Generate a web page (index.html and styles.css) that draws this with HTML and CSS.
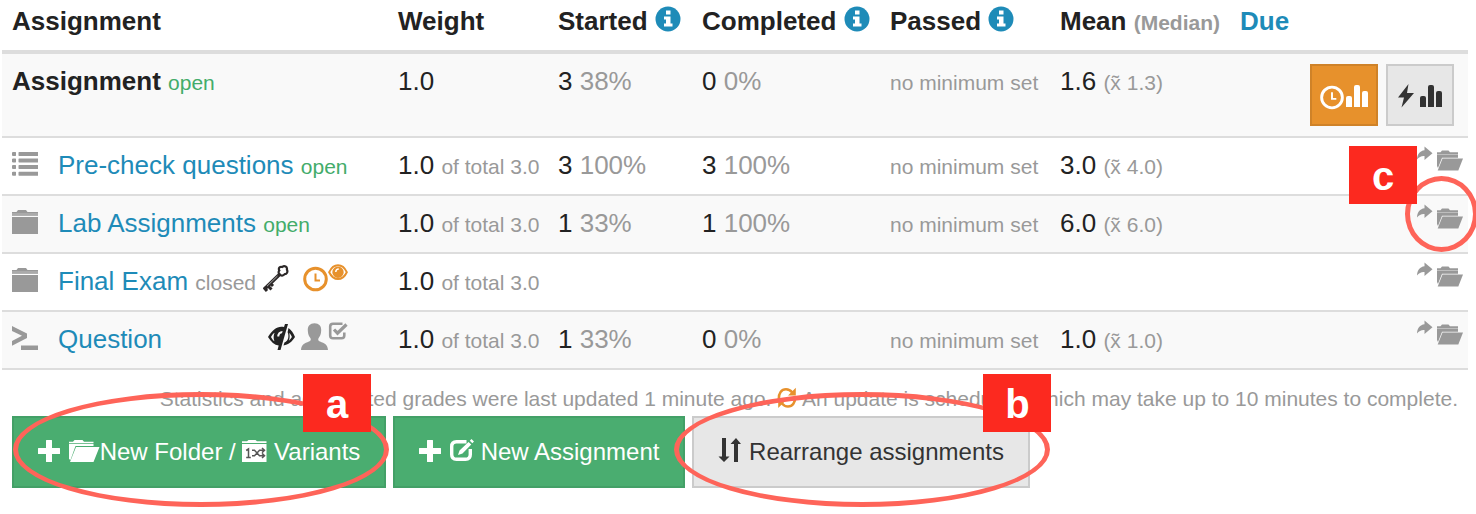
FILE: index.html
```html
<!DOCTYPE html>
<html lang="en">
<head>
<meta charset="utf-8">
<meta name="viewport" content="width=device-width, initial-scale=1">
<title>Assignments</title>
<link rel="stylesheet" href="styles.css">
</head>
<body>
<svg class="sprite" aria-hidden="true">
  <symbol id="info" viewBox="0 0 26 26"><circle cx="13" cy="13" r="12.500" fill="currentColor"/><path fill="#fff" d="M11 4.500h4.500v4H11zM9 10.500h6.500V17.500H17.500V20.500H9V17.500H11V13.500H9z"/></symbol>
  <symbol id="list" viewBox="0 0 26 24"><path fill="currentColor" d="M1 0h2.500l.5.5v3l-.5.500H1L0 3.500v-3zM1 6.600h2.500l.5.5v3l-.5.500H1L0 10v-3zM1 13h2.500l.5.5v3l-.5.500H1L0 16.500v-3zM1 19.800h2.500l.5.5v3l-.5.500H1L0 23.300v-3zM7 0h19v4H7l-.5-.5v-3zM7 6.600h19v4H7l-.5-.5v-3zM7 13h19v4H7l-.5-.5v-3zM7 19.800h19v4H7l-.5-.5v-3z"/></symbol>
  <symbol id="folder" viewBox="0 0 26 24"><path fill="currentColor" d="M0 2h4.500L6 0h8L15.500 2H26v1.700H0zM0 4.300h26v1.400H0zM0 7h26v17H0z"/><path fill="currentColor" opacity=".5" d="M0 3.500h26v1H0z"/></symbol>
  <symbol id="prompt" viewBox="0 0 26 24"><path fill="currentColor" d="M0 0l15 7.500v4.500L0 19.800v-4.800l10-5.200L0 4.900zM9 19.500h17v4.500H9z"/></symbol>
  <symbol id="open-folder" viewBox="0 0 26 26"><path fill="currentColor" d="M0 6.300h3.500L5 4.500h6.500L13 6.300h8V8.200H0zM0 9h21v2.700H5L1 22 0 20z"/><path fill="currentColor" opacity=".5" d="M0 8h21v1.200H0z"/><path fill="currentColor" d="M5.500 12.500H26L21.300 24.500H.7z"/></symbol>
  <symbol id="forward" viewBox="0 0 16 26"><path fill="currentColor" d="M0 13.500C.3 8 3 4.700 7.500 4.200V.5L15.500 7.300 7.500 14V10C4.500 9.700 2 11 0 13.500z"/></symbol>
  <symbol id="key" viewBox="0 0 26 28"><g fill="none" stroke="#2c2828"><path stroke-width="2.200" d="M16.300 6.500c-1.300-2.500.7-4.200 2.900-3.500 2.300-1.800 5.300-.3 4.700 2.600 1.300 2.300-.2 4.500-2.200 4.600-1.500 2-4.300 1.700-5.200-.2-1.200-.9-1.200-2.500-.2-3.500z"/><path stroke-width="3.600" d="M16.500 10.500L1.500 25"/><path stroke-width="3" d="M4.500 21.500l4 4M1 23.500l3 3.500M7.500 19.500l2.500 2.500"/></g><path stroke="#aaa" stroke-width="1" d="M14.500 12L4 22.200"/></symbol>
  <symbol id="clock" viewBox="0 0 25 28"><circle cx="12.500" cy="15" r="10.800" fill="none" stroke="currentColor" stroke-width="3"/><path fill="none" stroke="currentColor" stroke-width="2" d="M12.500 9.500V16.500H17"/></symbol>
  <symbol id="eye" viewBox="0 0 20 28"><path fill="none" stroke="currentColor" stroke-width="2" d="M1.200 8.200C5.500-1 14.500-1 18.800 8.200 14.500 17.300 5.500 17.300 1.200 8.200z"/><path fill="currentColor" fill-rule="evenodd" d="M10 2.500a5.700 5.700 0 1 1 0 11.400A5.700 5.700 0 0 1 10 2.500zM7 8h1.600c0-1.500.7-2.200 2.200-2.300V4.200C8.500 4.200 7 5.600 7 8z"/></symbol>
  <symbol id="eye-slash" viewBox="0 0 27 28"><path fill="currentColor" fill-rule="evenodd" d="M0 15C4.500 7.200 10 3.500 16 5l1-3h3l-7.500 26h-3l1.200-4.500C6.500 23 3 20 0 15zM3 15c1 1.900 2 3.200 3.400 4.200-1.100-2.700-1-5.700.2-8.400C5 11.900 4 13.200 3 15zM9.300 14.500h2c0-2 1-3.200 2.700-3.300l.6-2.200c-3.200.2-5.300 2.300-5.300 5.500z"/><path fill="currentColor" d="M20.500 6C23.300 8 25.500 11 27 15c-3.200 5-6.500 7.700-11.500 8.500l.9-3c2-.6 3.300-2.300 3.800-4.500.4-2.200.2-4-.6-5.700zM20.800 18.800c1.200-1 2.300-2.300 3.100-3.800-.7-1.700-1.500-2.800-2.600-3.900.6 3 .5 5.400-.5 7.700z" fill-rule="evenodd"/></symbol>
  <symbol id="user" viewBox="0 0 27 28"><path fill="currentColor" d="M13.500 1.300c4.500 0 7 3 6.700 7.200-.2 4.200-1.300 6-2.700 7.700-.7 1.700-.1 2.600 1.500 3.300 4.500 1.800 7.500 2.500 8 8.500H0c.5-6 3.500-6.700 8-8.500 1.600-.7 2.200-1.600 1.500-3.300C8 14.500 7 12.700 6.800 8.500 6.500 4.300 9 1.300 13.500 1.300z"/></symbol>
  <symbol id="check" viewBox="0 0 20 28"><path fill="none" stroke="currentColor" stroke-width="2.600" d="M14.500 1.800H5Q2.200 1.800 2.200 4.600V13.500Q2.200 16.300 5 16.300H13.500Q16.300 16.300 16.300 13.500V10.500"/><path fill="none" stroke="currentColor" stroke-width="3.200" d="M6 7.500l3.500 3.700L18.500 2.500"/></symbol>
  <symbol id="bars" viewBox="0 0 22 24"><path fill="currentColor" d="M0 23V14q0-2 2-2h2q2 0 2 2v9zM8 23V3q0-2 2-2h2q2 0 2 2V23zM16 23V9q0-2 2-2h2q2 0 2 2V23z"/></symbol>
  <symbol id="bolt" viewBox="0 0 16 24"><path fill="currentColor" d="M10.500 0L0 13.500h6L3.500 23.500 16 9H9z"/></symbol>
  <symbol id="refresh" viewBox="0 0 20 22"><g fill="none" stroke="currentColor" stroke-width="2.500"><path d="M1.800 12C1.500 6 4.500 2.300 9 2.300c2.800 0 4.500 1 6.300 3.200M18.200 9.500C18.500 15.500 15.500 19.500 11 19.500c-2.800 0-4.500-1-6.300-3.200"/></g><path fill="currentColor" d="M18.800.8V8.500H11zM1.200 21V13.300H9z"/></symbol>
  <symbol id="plus" viewBox="0 0 24 22"><path fill="currentColor" d="M8.500 0h5q.5 0 .5.500V8h7.500q.5 0 .5.500v5q0 .5-.5.500H14v7.500q0 .5-.5.500h-5q-.5 0-.5-.5V14H.5q-.5 0-.5-.5v-5Q0 8 .5 8H8V.5Q8 0 8.500 0z"/></symbol>
  <symbol id="folder-large" viewBox="0 0 31 22"><path fill="currentColor" d="M0 1.700h4L5.500 0h8L15 1.700h9.500V3.300H0zM0 4h24.500v2H6.500L1.500 20 0 19zM7 7H30.500L24.500 22H1z"/></symbol>
  <symbol id="variants" viewBox="0 0 25 22"><path fill="currentColor" d="M0 1.300h5L6.500 0h7L15 1.300h9.500V3H0zM0 4h24.500v18H0z"/><path fill="none" stroke="#555" stroke-width="1.500" d="M4.200 10.500L6.500 9v8.500M4.200 17.500h4.600M10 10.300h2.500l5 5.400H22M10 15.700h2.500l5-5.400H22M20 8l2.500 2.300L20 12.600M20 13.400l2.500 2.300L20 18"/></symbol>
  <symbol id="edit" viewBox="0 0 24 24"><path fill="none" stroke="currentColor" stroke-width="3.400" d="M16.500 3.700H6.500Q1.700 3.700 1.700 8.500V16.500Q1.700 21.300 6.500 21.300H15.500Q20.300 21.300 20.300 16.500V11"/><path fill="currentColor" d="M8 17l1.500-4.500L18.500 4l2.800 2.600-8.800 8.900zM19.800 2.800L21.500 1 24 3.400l-1.700 1.900z"/></symbol>
  <symbol id="sort" viewBox="0 0 24 24"><path fill="currentColor" d="M4 0H8V18.500H11.500L6 24 .5 18.500H4zM16 24H20V6H23L18 0 12.500 6H16z"/></symbol>
</svg>

<main class="page">
  <table class="grades">
    <colgroup>
      <col class="col-icon"><col class="col-name"><col class="col-weight"><col class="col-started"><col class="col-completed"><col class="col-passed"><col class="col-mean"><col class="col-due"><col>
    </colgroup>
    <thead>
      <tr>
        <th colspan="2" scope="col">Assignment</th>
        <th scope="col">Weight</th>
        <th scope="col">Started <a href="#started" aria-label="About started"><svg class="info"><use href="#info"/></svg></a></th>
        <th scope="col">Completed <a href="#completed" aria-label="About completed"><svg class="info"><use href="#info"/></svg></a></th>
        <th scope="col">Passed <a href="#passed" aria-label="About passed"><svg class="info"><use href="#info"/></svg></a></th>
        <th scope="col">Mean <small>(Median)</small></th>
        <th scope="col"><a href="#due">Due</a></th>
        <td></td>
      </tr>
    </thead>
    <tbody>
      <tr>
        <td colspan="2"><strong>Assignment</strong> <small class="open">open</small></td>
        <td>1.0</td>
        <td>3 <span class="muted">38%</span></td>
        <td>0 <span class="muted">0%</span></td>
        <td><small>no minimum set</small></td>
        <td>1.6 <small>(x&#771; 1.3)</small></td>
        <td></td>
        <td class="tools-cell">
          <div class="tools">
            <button class="tool tool-timed" type="button" aria-label="Timed statistics"><svg class="tool-icon"><use href="#clock"/></svg><svg class="bars"><use href="#bars"/></svg></button>
            <button class="tool" type="button" aria-label="Quick statistics"><svg class="bolt"><use href="#bolt"/></svg><svg class="bars"><use href="#bars"/></svg></button>
          </div>
        </td>
      </tr>
      <tr>
        <td><svg class="type"><use href="#list"/></svg></td>
        <td><a href="#precheck">Pre-check questions</a> <small class="open">open</small></td>
        <td>1.0 <small>of total 3.0</small></td>
        <td>3 <span class="muted">100%</span></td>
        <td>3 <span class="muted">100%</span></td>
        <td><small>no minimum set</small></td>
        <td>3.0 <small>(x&#771; 4.0)</small></td>
        <td></td>
        <td class="move-cell"><a class="move" href="#move-precheck" aria-label="Move to folder"><svg class="forward"><use href="#forward"/></svg><svg class="target"><use href="#open-folder"/></svg></a></td>
      </tr>
      <tr>
        <td><svg class="type"><use href="#folder"/></svg></td>
        <td><a href="#lab">Lab Assignments</a> <small class="open">open</small></td>
        <td>1.0 <small>of total 3.0</small></td>
        <td>1 <span class="muted">33%</span></td>
        <td>1 <span class="muted">100%</span></td>
        <td><small>no minimum set</small></td>
        <td>6.0 <small>(x&#771; 6.0)</small></td>
        <td></td>
        <td class="move-cell"><a class="move" href="#move-lab" aria-label="Move to folder"><svg class="forward"><use href="#forward"/></svg><svg class="target"><use href="#open-folder"/></svg></a><span class="ring ring-round"></span><span class="badge badge-row">c</span></td>
      </tr>
      <tr>
        <td><svg class="type"><use href="#folder"/></svg></td>
        <td><span class="status timed"><svg class="s25"><use href="#clock"/></svg><svg class="s20"><use href="#eye"/></svg></span><a href="#final">Final Exam</a> <small>closed</small> <svg class="key"><use href="#key"/></svg></td>
        <td>1.0 <small>of total 3.0</small></td>
        <td></td>
        <td></td>
        <td></td>
        <td></td>
        <td></td>
        <td class="move-cell"><a class="move" href="#move-final" aria-label="Move to folder"><svg class="forward"><use href="#forward"/></svg><svg class="target"><use href="#open-folder"/></svg></a></td>
      </tr>
      <tr>
        <td><svg class="type"><use href="#prompt"/></svg></td>
        <td><span class="status"><svg class="s27 hidden-mark"><use href="#eye-slash"/></svg><svg class="s27"><use href="#user"/></svg><svg class="s20"><use href="#check"/></svg></span><a href="#question">Question</a></td>
        <td>1.0 <small>of total 3.0</small></td>
        <td>1 <span class="muted">33%</span></td>
        <td>0 <span class="muted">0%</span></td>
        <td><small>no minimum set</small></td>
        <td>1.0 <small>(x&#771; 1.0)</small></td>
        <td></td>
        <td class="move-cell"><a class="move" href="#move-question" aria-label="Move to folder"><svg class="forward"><use href="#forward"/></svg><svg class="target"><use href="#open-folder"/></svg></a></td>
      </tr>
    </tbody>
  </table>

  <p class="note">Statistics and aggregated grades were last updated 1 minute ago. <svg class="refresh"><use href="#refresh"/></svg> An update is scheduled, which may take up to 10 minutes to complete.</p>

  <div class="actions">
    <div class="action">
      <button class="btn btn-new" type="button"><svg class="plus"><use href="#plus"/></svg> <svg class="folder-large"><use href="#folder-large"/></svg>New Folder / <svg class="variants"><use href="#variants"/></svg> Variants</button>
      <span class="ring ring-new"></span><span class="badge badge-action">a</span>
    </div>
    <div class="action">
      <button class="btn btn-new" type="button"><svg class="plus"><use href="#plus"/></svg> <svg class="edit"><use href="#edit"/></svg> New Assignment</button>
    </div>
    <div class="action">
      <button class="btn" type="button"><svg class="sort"><use href="#sort"/></svg> Rearrange assignments</button>
      <span class="ring ring-sort"></span><span class="badge badge-action">b</span>
    </div>
  </div>
</main>
</body>
</html>
```
FILE: styles.css
```css
* { box-sizing: border-box; }

body {
  margin: 0;
  background: #fff;
  color: #222;
  font: 26px/36px "Liberation Sans", Arial, Helvetica, sans-serif;
}

.sprite { position: absolute; width: 0; height: 0; }

.page { padding: 0 8px 26px 2px; overflow: hidden; }

a { color: #1e8bb8; text-decoration: none; }
small { font-size: 21px; line-height: 24px; color: #999; }
.muted { color: #999; }
.open { color: #43ac6a; }

/* Grade table */
.grades { width: 100%; table-layout: fixed; border-collapse: separate; border-spacing: 0; }
.col-icon { width: 46px; }
.col-name { width: 340px; }
.col-weight { width: 160px; }
.col-started { width: 144px; }
.col-completed { width: 188px; }
.col-passed { width: 170px; }
.col-mean { width: 180px; }
.col-due { width: 70px; }

.grades th, .grades td {
  padding: 9px 0 11px 10px;
  text-align: left;
  vertical-align: top;
  white-space: nowrap;
  border-bottom: 2px solid #ddd;
}
.grades thead th, .grades thead td { padding-top: 3px; border-bottom-width: 4px; height: 54px; }
.grades tbody tr:nth-child(odd) { background: #f9f9f9; }

.info { width: 26px; height: 26px; vertical-align: -2px; }
.type { display: block; width: 26px; height: 24px; color: #999; margin-top: 5px; }
.key { width: 26px; height: 28px; vertical-align: -2px; }

.status { float: right; display: flex; margin-right: 40px; color: #999; }
.status svg { height: 28px; margin-top: 1px; }
.timed { color: #e7912c; }
.s20 { width: 20px; }
.s25 { width: 25px; }
.s27 { width: 27px; }
.hidden-mark { color: #222; margin-right: 6px; }

.grades .tools-cell { padding: 10px 14px 10px 0; }
.tools { display: flex; justify-content: flex-end; gap: 8px; }
.tool {
  display: flex;
  align-items: center;
  justify-content: center;
  gap: 2px;
  width: 68px;
  height: 62px;
  padding: 2px 0 0;
  border: 2px solid #cbcbcb;
  background: #e7e7e7;
  color: #333;
}
.tool-timed { border-color: #cf8228; background: #e7912c; color: #fff; }
.tool-icon { width: 24px; height: 27px; }
.bars { width: 22px; height: 24px; }
.bolt { width: 16px; height: 24px; margin-right: 4px; }

.grades .move-cell { position: relative; padding: 8px 5px 0 0; }
.move { display: flex; justify-content: flex-end; gap: 4px; color: #999; }
.forward { width: 16px; height: 26px; }
.target { width: 26px; height: 26px; }

/* Update note */
.note {
  margin: 0;
  padding: 14px 10px 2px;
  font-size: 21px;
  line-height: 30px;
  color: #999;
  text-align: right;
}
.refresh { width: 20px; height: 22px; vertical-align: -3px; color: #e7912c; }

/* Action buttons */
.actions { display: flex; gap: 7px; padding-left: 10px; }
.action { position: relative; }
.btn {
  height: 72px;
  padding: 0 24px;
  border: 2px solid #cbcbcb;
  background: #e7e7e7;
  color: #333;
  font: 24px/28px "Liberation Sans", Arial, Helvetica, sans-serif;
  white-space: nowrap;
}
.btn-new { border-color: #43a067; background: #4aad70; color: #fff; }
.plus { width: 24px; height: 22px; vertical-align: -2px; }
.folder-large { width: 31px; height: 22px; vertical-align: -2px; }
.variants { width: 25px; height: 22px; vertical-align: -2px; }
.edit { width: 24px; height: 24px; vertical-align: -2px; }
.sort { width: 24px; height: 24px; vertical-align: -2px; }

/* Callouts */
.ring {
  position: absolute;
  border: 5px solid #fe6459;
  border-radius: 50%;
  pointer-events: none;
}
.ring-new, .ring-sort { top: -24px; width: 376px; height: 115px; }
.ring-new { left: 1px; }
.ring-sort { left: -18px; }
.ring-round { top: -20px; right: -10px; width: 73px; height: 76px; }
.badge {
  position: absolute;
  width: 68px;
  height: 58px;
  padding-top: 2px;
  background: #fc291f;
  color: #fff;
  font-size: 40px;
  font-weight: bold;
  line-height: 56px;
  text-align: center;
}
.badge-action { top: -42px; left: 291px; }
.badge-row { top: -50px; right: 51px; }
```
